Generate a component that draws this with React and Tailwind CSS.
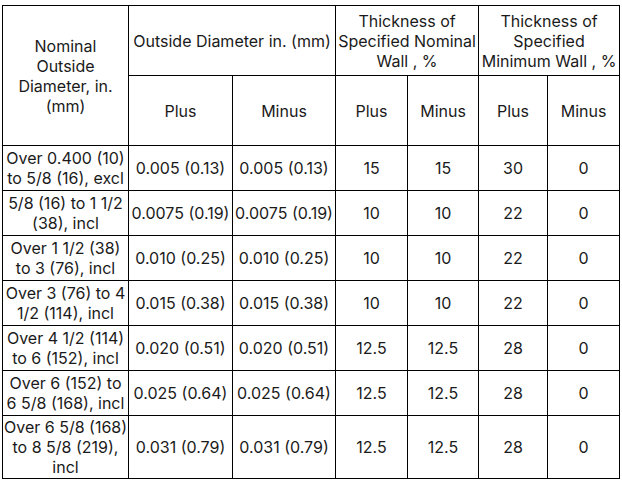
import React from "react";

const rows = [
  ["Over 0.400 (10) to 5/8 (16), excl", "0.005 (0.13)", "0.005 (0.13)", "15", "15", "30", "0", "h-[45px]"],
  ["5/8 (16) to 1 1/2 (38), incl", "0.0075 (0.19)", "0.0075 (0.19)", "10", "10", "22", "0", "h-[45px]"],
  ["Over 1 1/2 (38) to 3 (76), incl", "0.010 (0.25)", "0.010 (0.25)", "10", "10", "22", "0", "h-[45px]"],
  ["Over 3 (76) to 4 1/2 (114), incl", "0.015 (0.38)", "0.015 (0.38)", "10", "10", "22", "0", "h-[45px]"],
  ["Over 4 1/2 (114) to 6 (152), incl", "0.020 (0.51)", "0.020 (0.51)", "12.5", "12.5", "28", "0", "h-[45px]"],
  ["Over 6 (152) to 6 5/8 (168), incl", "0.025 (0.64)", "0.025 (0.64)", "12.5", "12.5", "28", "0", "h-[45px]"],
  [
    <>
      <span className="whitespace-nowrap">Over 6 5/8 (168)</span>
      <br />
      <span className="whitespace-nowrap">to 8 5/8 (219),</span>
      <br />
      incl
    </>,
    "0.031 (0.79)", "0.031 (0.79)", "12.5", "12.5", "28", "0", "h-[63px]",
  ],
];

const td = "border border-black text-center align-middle p-0";

export default function App() {
  return (
    <div className="bg-white w-[622px] h-[482px] pl-[2px] pt-[5px] text-[16px] leading-[20px] text-[#1a1a1a]" style={{ fontFamily: "Inter, 'Noto Sans', sans-serif" }}>
      <table className="border-collapse table-fixed w-[617px]">
        <colgroup>
          <col className="w-[126px]" />
          <col className="w-[104px]" />
          <col className="w-[103px]" />
          <col className="w-[72px]" />
          <col className="w-[71px]" />
          <col className="w-[69px]" />
          <col className="w-[72px]" />
        </colgroup>
        <tbody>
          <tr className="h-[70px]">
            <td rowSpan={2} className={td + " px-[6px]"}>Nominal Outside Diameter, in. (mm)</td>
            <td colSpan={2} className={td + " whitespace-nowrap"}>Outside Diameter in. (mm)</td>
            <td colSpan={2} className={td + " whitespace-nowrap"}>Thickness of<br />Specified Nominal<br />Wall , %</td>
            <td colSpan={2} className={td + " whitespace-nowrap"}>Thickness of<br />Specified<br />Minimum Wall , %</td>
          </tr>
          <tr className="h-[70px]">
            <td className={td}>Plus</td>
            <td className={td}>Minus</td>
            <td className={td}>Plus</td>
            <td className={td}>Minus</td>
            <td className={td}>Plus</td>
            <td className={td}>Minus</td>
          </tr>
          {rows.map((r, i) => (
            <tr key={i} className={r[7]}>
              <td className={td + " px-[1px]"}>{r[0]}</td>
              <td className={td + " whitespace-nowrap"}>{r[1]}</td>
              <td className={td + " whitespace-nowrap"}>{r[2]}</td>
              <td className={td}>{r[3]}</td>
              <td className={td}>{r[4]}</td>
              <td className={td}>{r[5]}</td>
              <td className={td}>{r[6]}</td>
            </tr>
          ))}
        </tbody>
      </table>
    </div>
  );
}
